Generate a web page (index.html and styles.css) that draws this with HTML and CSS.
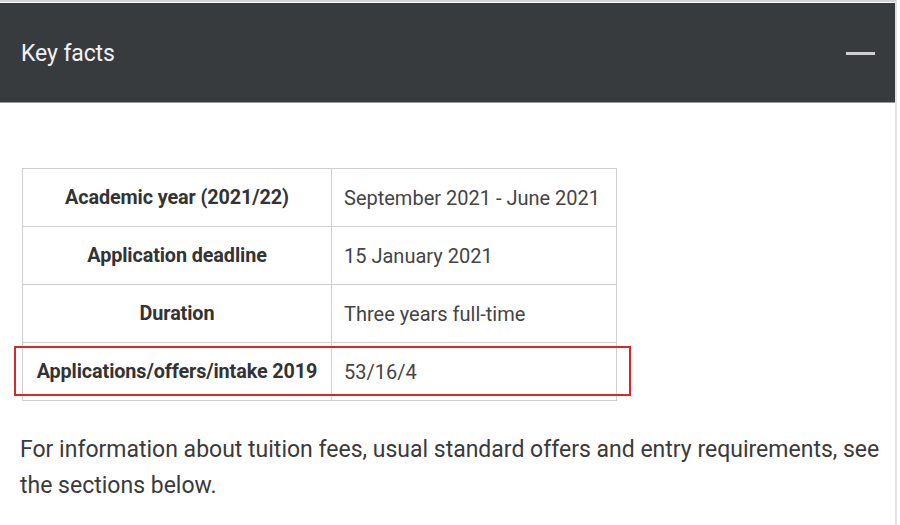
FILE: index.html
```html
<!DOCTYPE html>
<html lang="en">
<head>
<meta charset="utf-8">
<title>Key facts</title>
<link rel="stylesheet" href="styles.css">
</head>
<body>
<section class="panel">
  <header class="panel-head">
    <h2 class="panel-title">Key facts</h2>
    <span class="toggle" aria-label="Collapse"></span>
  </header>
  <div class="panel-body">
    <div class="table-wrap">
      <table class="facts">
        <tr><th>Academic year (2021/22)</th><td>September 2021 - June 2021</td></tr>
        <tr><th>Application deadline</th><td>15 January 2021</td></tr>
        <tr><th>Duration</th><td>Three years full-time</td></tr>
        <tr><th>Applications/offers/intake 2019</th><td>53/16/4</td></tr>
      </table>
      <div class="highlight"></div>
    </div>
    <p class="note">For information about tuition fees, usual standard offers and entry requirements, see the sections below.</p>
  </div>
</section>
</body>
</html>
```
FILE: styles.css
```css
html, body {
  margin: 0;
  padding: 0;
  background: #ffffff;
}
body {
  font-family: Roboto, "Liberation Sans", sans-serif;
  color: #333;
}
.panel {
  width: 897px;
  height: 525px;
  border-top: 2px solid #d4d4d4;
  border-right: 2px solid #e2e2e2;
  box-sizing: border-box;
}
.panel-head {
  margin-top: 1px;
  height: 99px;
  background: #383b3e;
  border-bottom: 1px solid #9a9a9a;
  display: flex;
  align-items: center;
  justify-content: space-between;
  padding: 2px 20px 0 21px;
  box-sizing: border-box;
  height: 100px;
}
.panel-title {
  margin: 0;
  font-weight: 400;
  font-size: 23px;
  color: #f2f2f2;
  letter-spacing: -0.1px;
}
.toggle {
  display: block;
  width: 29px;
  height: 3px;
  background: #d0d0d0;
}
.panel-body {
  padding: 65px 0 0 22px;
}
.table-wrap {
  position: relative;
  width: 595px;
}
.facts {
  border-collapse: collapse;
  width: 595px;
  font-size: 20px;
}
.facts th, .facts td {
  border: 1px solid #cfcfcf;
  height: 58px;
  padding: 0 12px;
  box-sizing: border-box;
}
.facts th {
  width: 309px;
  font-weight: 700;
  text-align: center;
  color: #333;
  font-size: 19.8px;
  letter-spacing: -0.1px;
}
.facts td {
  text-align: left;
  color: #444;
  font-weight: 400;
}
.highlight {
  position: absolute;
  left: -8px;
  top: 178px;
  width: 613px;
  height: 46px;
  border: 2px solid #d7282f;
  box-sizing: content-box;
}
.note {
  margin: 31px 10px 0 -2px;
  font-size: 23px;
  line-height: 36px;
  color: #3a3a3a;
  letter-spacing: 0;
}
```
